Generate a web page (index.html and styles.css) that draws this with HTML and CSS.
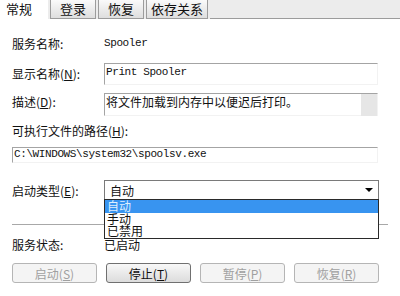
FILE: index.html
```html
<!DOCTYPE html>
<html lang="zh-CN">
<head>
  <meta charset="UTF-8" />
  <title>Print Spooler 的属性</title>
  <link rel="stylesheet" href="styles.css">
</head>
<body>

  <div class="tabs">
    <div class="tab active">常规</div>
    <div class="tab">登录</div>
    <div class="tab">恢复</div>
    <div class="tab">依存关系</div>
    <div class="tabfill"></div>
  </div>

  <div class="row name">
    <div class="label">服务名称:</div>
    <div class="mono">Spooler</div>
  </div>

  <div class="row display">
    <div class="label">显示名称(<u>N</u>):</div>
    <div class="field mono">Print Spooler</div>
  </div>

  <div class="row desc">
    <div class="label">描述(<u>D</u>):</div>
    <div class="field descbox">
      <div class="desctext">将文件加载到内存中以便迟后打印。</div>
      <div class="scroll"></div>
    </div>
  </div>

  <div class="row pathlabel">
    <div>可执行文件的路径(<u>H</u>):</div>
  </div>

  <div class="row pathrow">
    <div class="field path mono">C:\WINDOWS\system32\spoolsv.exe</div>
  </div>

  <div class="row startup">
    <div class="label">启动类型(<u>E</u>):</div>
    <div class="combo">
      <div class="combotext">自动</div>
      <span class="arrow"></span>
      <div class="droplist">
        <div class="item selected">自动</div>
        <div class="item">手动</div>
        <div class="item">已禁用</div>
      </div>
    </div>
  </div>

  <div class="sep"></div>

  <div class="row status">
    <div class="label">服务状态:</div>
    <div>已启动</div>
  </div>

  <div class="buttons">
    <button class="btn" disabled>启动(<u>S</u>)</button>
    <button class="btn">停止(<u>T</u>)</button>
    <button class="btn" disabled>暂停(<u>P</u>)</button>
    <button class="btn" disabled>恢复(<u>R</u>)</button>
  </div>

</body>
</html>
```

FILE: styles.css
```css
html, body {
  margin: 0;
  background: #fff;
}
body {
  width: 400px;
  height: 296px;
  overflow: hidden;
  font-family: "Noto Sans CJK SC", sans-serif;
  font-size: 12px;
  color: #111;
}
u {
  text-decoration: underline;
}
.mono {
  font-family: "Liberation Mono", monospace;
  font-size: 11px;
  letter-spacing: -0.4px;
}

/* tab strip */
.tabs {
  display: flex;
  height: 19px;
  background: #ececec;
  gap: 2px;
}
.tab {
  box-sizing: border-box;
  height: 19px;
  min-width: 46px;
  padding: 0 4px;
  border: 1px solid #9c9c9c;
  border-top: none;
  background: linear-gradient(#fafafa, #dedede);
  font-size: 13px;
  line-height: 18px;
  text-align: center;
}
.tab.active {
  width: 48px;
  padding-left: 6px;
  text-align: left;
  border: none;
  background: #fff;
}
.tabfill {
  flex: 1;
  border-bottom: 1px solid #9c9c9c;
}

/* rows */
.row {
  display: flex;
  align-items: center;
  padding: 0 12px;
}
.label {
  width: 92px;
  flex-shrink: 0;
}
.name {
  margin-top: 13px;
  height: 22px;
}
.field {
  box-sizing: border-box;
  border-top: 1px solid #a4a4a4;
  border-left: 1px solid #a4a4a4;
  border-right: 1px solid #f2f2f2;
  border-bottom: 1px solid #f2f2f2;
  background: #fff;
}
.display {
  margin-top: 9px;
  align-items: flex-start;
}
.display .label {
  line-height: 22px;
}
.display .field {
  width: 274px;
  height: 22px;
  padding: 1px 1px 0;
  line-height: 14px;
}
.desc {
  margin-top: 8px;
  align-items: flex-start;
}
.desc .label {
  line-height: 18px;
}
.descbox {
  display: flex;
  width: 274px;
  height: 23px;
}
.desctext {
  flex: 1;
  line-height: 15px;
  padding-left: 1px;
}
.scroll {
  width: 16px;
  height: 22px;
  background: #e6e6e6;
}
.pathlabel {
  margin-top: 6px;
  height: 16px;
}
.pathrow {
  margin-top: 9px;
}
.path {
  width: 366px;
  height: 16px;
  padding: 0 1px;
  line-height: 13px;
}

/* combo box with open list */
.startup {
  margin-top: 17px;
}
.combo {
  position: relative;
  box-sizing: border-box;
  display: flex;
  align-items: center;
  width: 275px;
  height: 20px;
  border: 1px solid #7a7a7a;
  padding-left: 5px;
}
.combotext {
  flex: 1;
}
.arrow {
  width: 0;
  height: 0;
  border-left: 4px solid transparent;
  border-right: 4px solid transparent;
  border-top: 4px solid #000;
  margin-right: 5px;
}
.droplist {
  position: absolute;
  top: 18px;
  left: -1px;
  right: -1px;
  border: 1px solid #2a2a2a;
  background: #fff;
}
.item {
  height: 12.5px;
  line-height: 12.5px;
  font-size: 12px;
  padding-left: 2px;
}
.item.selected {
  background: #3894f0;
  color: #dfefff;
}

.sep {
  margin: 24px 12px 0;
  border-top: 1px solid #a8a8a8;
  border-bottom: 1px solid #fff;
}
.status {
  margin-top: 10px;
  height: 16px;
}

/* buttons */
.buttons {
  display: flex;
  gap: 9px;
  padding: 0 12px;
  margin-top: 11px;
}
.btn {
  box-sizing: border-box;
  width: 85px;
  height: 20px;
  padding: 0;
  border: 1px solid #707070;
  border-radius: 3px;
  background: linear-gradient(#f8f8f8, #dcdcdc);
  font-family: "Noto Sans CJK SC", sans-serif;
  font-size: 12px;
  color: #111;
}
.btn:disabled {
  border-color: #b5b5b5;
  background: #f4f4f4;
  color: #a0a0a0;
}
```
